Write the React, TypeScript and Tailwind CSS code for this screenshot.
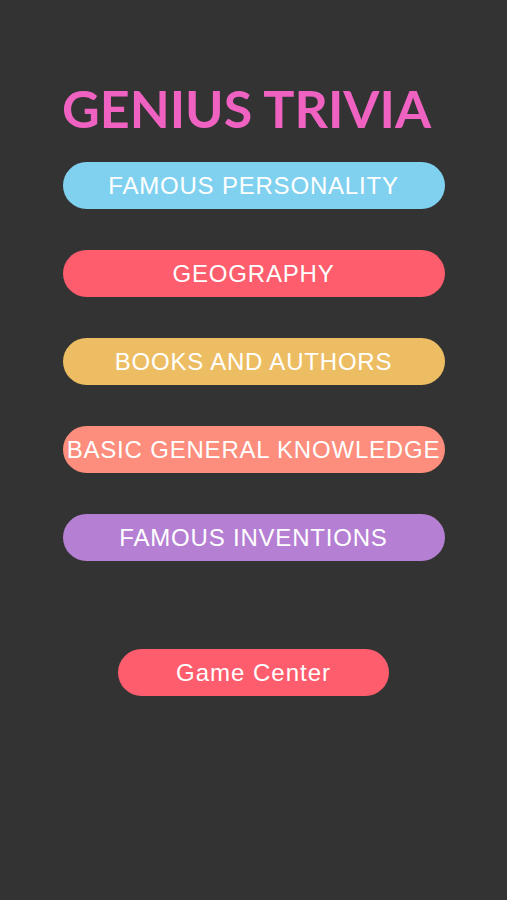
const categories = [
  { label: "FAMOUS PERSONALITY", color: "bg-[#7fd1ef]" },
  { label: "GEOGRAPHY", color: "bg-[#fd5d6d]" },
  { label: "BOOKS AND AUTHORS", color: "bg-[#edbd63]" },
  { label: "BASIC GENERAL KNOWLEDGE", color: "bg-[#fd8d7c]" },
  { label: "FAMOUS INVENTIONS", color: "bg-[#b57fd3]" },
];

const App = () => {
  return (
    <div className="w-[507px] h-[900px] bg-[#333333] flex flex-col items-center font-['Liberation_Sans',Arial,sans-serif]">
      <h1 className="mt-[80px] mr-[14px] h-[56px] flex items-center text-[52px] leading-none font-bold text-[#ef62c1] font-['Lato',sans-serif]">
        GENIUS TRIVIA
      </h1>
      <div className="mt-[26px] flex flex-col gap-[41px]">
        {categories.map((c) => (
          <button
            key={c.label}
            className={`w-[382px] h-[47px] rounded-full ${c.color} text-white text-[24px] tracking-[0.8px] whitespace-nowrap flex items-center justify-center`}
          >
            {c.label}
          </button>
        ))}
      </div>
      <button className="mt-[88px] w-[271px] h-[47px] rounded-full bg-[#fd5d6d] text-white text-[24px] tracking-[1px] flex items-center justify-center">
        Game Center
      </button>
    </div>
  );
};

export default App;
